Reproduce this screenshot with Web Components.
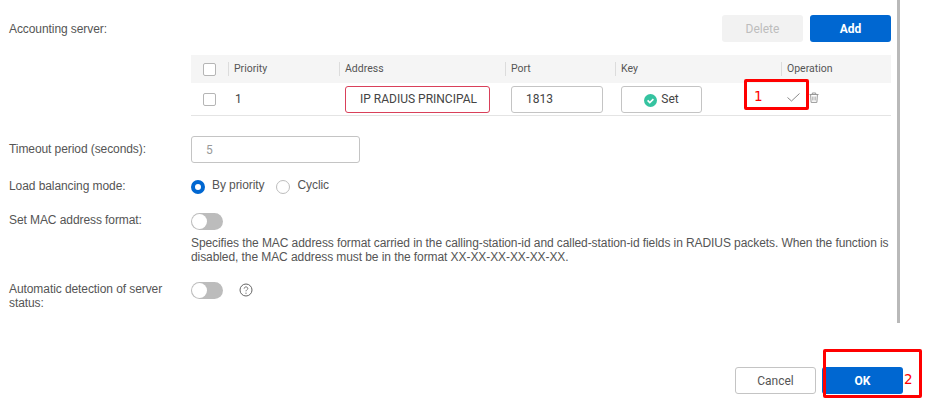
<!DOCTYPE html>
<html>
<head>
<meta charset="utf-8">
<style>
    html, body { margin: 0; padding: 0; background: #fff; }
    body { font-family: "Liberation Sans", Arial, sans-serif; font-size: 12px; letter-spacing: -0.08px; color: #555; }
</style>
</head>
<body>
<dialog-page>
    <form-row label="Accounting server:" pad="22">
        <div style="display:flex;justify-content:flex-end;gap:7px;padding-top:15px;padding-bottom:13px">
            <ui-button kind="disabled">Delete</ui-button>
            <ui-button kind="primary">Add</ui-button>
        </div>
    </form-row>
    <server-table></server-table>
    <form-row label="Timeout period (seconds):" pad="6" style="margin-top:20px">
        <ui-input value="5" width="169" muted></ui-input>
    </form-row>
    <form-row label="Load balancing mode:" pad="1" style="margin-top:15px">
        <div style="display:flex;align-items:center;gap:12px;height:16px">
            <ui-radio checked>By priority</ui-radio>
            <ui-radio>Cyclic</ui-radio>
        </div>
    </form-row>
    <form-row label="Set MAC address format:" pad="0" style="margin-top:19px">
        <ui-toggle></ui-toggle>
        <div style="margin-top:6px;line-height:14px;height:28px;width:702px;color:#555;white-space:nowrap">Specifies the MAC address format carried in the calling-station-id and called-station-id fields in RADIUS packets. When the function is<br>disabled, the MAC address must be in the format XX-XX-XX-XX-XX-XX.</div>
    </form-row>
    <form-row label="Automatic detection of server status:" pad="0" style="margin-top:18px">
        <div style="display:flex;align-items:center;gap:16px">
            <ui-toggle></ui-toggle>
            <svg style="margin-top:-2px" width="14" height="14" viewBox="0 0 14 14" fill="none" stroke="#666" stroke-width="1"><circle cx="7" cy="7" r="6"/><path d="M5.2 5.6c0-1 .8-1.7 1.8-1.7s1.8.7 1.8 1.6c0 1.2-1.8 1.3-1.8 2.8" stroke-width=".9"/><circle cx="7" cy="10.2" r=".6" fill="#666" stroke="none"/></svg>
        </div>
    </form-row>
    <dialog-footer slot="footer"></dialog-footer>
</dialog-page>

<script>
class DialogPage extends HTMLElement {
    constructor() {
        super();
        this.shadow = this.attachShadow({ mode: 'open' });
    }

    connectedCallback() {
        this.shadow.innerHTML = `
            <style>
                :host { display: block; width: 925px; height: 413px; position: relative; overflow: hidden; }
                .pane {
                    box-sizing: border-box;
                    width: 900px;
                    height: 323px;
                    padding: 0 6px 0 9px;
                    border-right: 3px solid #b9b9b9;
                    overflow: hidden;
                }
            </style>
            <div class="pane"><slot></slot></div>
            <slot name="footer"></slot>
        `;
    }
}

class FormRow extends HTMLElement {
    constructor() {
        super();
        this.shadow = this.attachShadow({ mode: 'open' });
    }

    connectedCallback() {
        const pad = this.getAttribute('pad') || 0;
        this.shadow.innerHTML = `
            <style>
                :host { display: grid; grid-template-columns: 182px 700px; }
                .label { padding-top: ${pad}px; padding-right: 10px; line-height: 14px; color: #555; }
            </style>
            <div class="label">${this.getAttribute('label')}</div>
            <div><slot></slot></div>
        `;
    }
}

class UiButton extends HTMLElement {
    constructor() {
        super();
        this.shadow = this.attachShadow({ mode: 'open' });
    }

    connectedCallback() {
        this.shadow.innerHTML = `
            <style>
                :host {
                    display: inline-flex;
                    box-sizing: border-box;
                    align-items: center;
                    justify-content: center;
                    width: 81px;
                    height: 27px;
                    border-radius: 3px;
                    font-family: Roboto, sans-serif;
                    font-size: 12px;
                    letter-spacing: 0;
                }
                :host([kind="primary"]) { background: #0067d1; color: #fff; font-weight: 700; }
                :host([kind="disabled"]) { background: #f2f2f2; color: #bdbdbd; }
                :host([kind="plain"]) { background: #fff; color: #555; border: 1px solid #c4c4c4; }
            </style>
            <slot></slot>
        `;
    }
}

class UiInput extends HTMLElement {
    constructor() {
        super();
        this.shadow = this.attachShadow({ mode: 'open' });
    }

    connectedCallback() {
        const width = this.getAttribute('width');
        this.shadow.innerHTML = `
            <style>
                :host {
                    display: flex;
                    box-sizing: border-box;
                    align-items: center;
                    width: ${width}px;
                    height: 27px;
                    padding-left: 14px;
                    border: 1px solid #c4c4c4;
                    border-radius: 3px;
                    background: #fff;
                    font-family: Roboto, sans-serif;
                    font-size: 12px;
                    letter-spacing: 0;
                    color: #444;
                    white-space: nowrap;
                }
                :host([muted]) { color: #999; }
                :host([invalid]) { border-color: #d9405a; }
            </style>
            ${this.getAttribute('value')}
        `;
    }
}

class UiCheck extends HTMLElement {
    constructor() {
        super();
        this.shadow = this.attachShadow({ mode: 'open' });
    }

    connectedCallback() {
        this.shadow.innerHTML = `
            <style>
                :host { display: block; box-sizing: border-box; width: 13px; height: 13px; border: 1px solid #b5b5b5; border-radius: 2px; background: #fff; }
            </style>
        `;
    }
}

class UiRadio extends HTMLElement {
    constructor() {
        super();
        this.shadow = this.attachShadow({ mode: 'open' });
    }

    connectedCallback() {
        this.shadow.innerHTML = `
            <style>
                :host { display: inline-flex; align-items: center; gap: 7px; color: #555; }
                i { display: block; box-sizing: border-box; width: 14px; height: 14px; border-radius: 50%; border: 1px solid #bdbdbd; background: #fff; margin-top: 1px; }
                :host([checked]) i { border: 4px solid #0067d1; }
                span { position: relative; top: -1px; }
            </style>
            <i></i><span><slot></slot></span>
        `;
    }
}

class UiToggle extends HTMLElement {
    constructor() {
        super();
        this.shadow = this.attachShadow({ mode: 'open' });
    }

    connectedCallback() {
        this.shadow.innerHTML = `
            <style>
                :host { display: flex; align-items: center; box-sizing: border-box; width: 32px; height: 17px; padding-left: 1px; border-radius: 9px; background: #bcbcbc; }
                i { display: block; width: 15px; height: 15px; border-radius: 50%; background: #fff; }
            </style>
            <i></i>
        `;
    }
}

class ServerTable extends HTMLElement {
    constructor() {
        super();
        this.shadow = this.attachShadow({ mode: 'open' });
    }

    connectedCallback() {
        const heads = ['Priority', 'Address', 'Port', 'Key', 'Operation'];
        this.shadow.innerHTML = `
            <style>
                :host {
                    display: block;
                    width: 700px;
                    margin-left: 182px;
                    font-family: Roboto, sans-serif;
                    letter-spacing: 0;
                    color: #555;
                }
                .row { display: grid; grid-template-columns: 37px 111px 166px 110px 166px 110px; align-items: center; }
                .head { height: 28px; background: #f5f5f5; font-size: 10.5px; }
                .body { height: 32px; border-bottom: 1px solid #e4e4e4; font-size: 12px; color: #444; }
                .box { padding-left: 12px; }
                .th { box-sizing: border-box; height: 14px; line-height: 13px; padding-left: 5px; border-left: 1px solid #dcdcdc; }
                .td { padding-left: 6px; }
                .set { display: flex; align-items: center; justify-content: center; gap: 4px; box-sizing: border-box; width: 81px; height: 27px; border: 1px solid #c4c4c4; border-radius: 3px; }
                .set svg { margin-top: 2px; }
                .ops { position: relative; display: flex; align-items: center; height: 100%; padding-left: 6px; }
                .ops svg { display: block; }
                .ops .tick { margin-top: -3px; margin-right: 10px; }
                .ops .bin { margin-top: -3px; }
                .mark {
                    position: absolute;
                    left: -37px;
                    top: -4px;
                    box-sizing: border-box;
                    width: 65px;
                    height: 31px;
                    padding: 6px 0 0 7px;
                    border: 3px solid #f00;
                    border-radius: 2px;
                    color: #f00;
                    font-family: "DejaVu Sans", sans-serif;
                    font-size: 13.5px;
                    line-height: 16px;
                }
            </style>
            <div class="row head">
                <div class="box"><ui-check></ui-check></div>
                ${heads.map(h => `<div class="th">${h}</div>`).join('')}
            </div>
            <div class="row body">
                <div class="box"><ui-check></ui-check></div>
                <div class="td" style="padding-left:7px">1</div>
                <div class="td"><ui-input value="IP RADIUS PRINCIPAL" width="145" invalid></ui-input></div>
                <div class="td"><ui-input value="1813" width="92"></ui-input></div>
                <div class="td">
                    <div class="set">
                        <svg width="13" height="13" viewBox="0 0 13 13"><circle cx="6.5" cy="6.5" r="6.5" fill="#35c3a0"/><path d="M3.6 6.4l2.2 2.2 3.6-3.4" fill="none" stroke="#fff" stroke-width="1.6"/></svg>
                        <span>Set</span>
                    </div>
                </div>
                <div class="ops">
                    <div class="mark">1</div>
                    <svg class="tick" width="13" height="9" viewBox="0 0 13 9" fill="none" stroke="#8a8a8a" stroke-width="1"><path d="M.5 4.5l4 3.5 8-7.5"/></svg>
                    <svg class="bin" width="10" height="11" viewBox="0 0 10 11" fill="none" stroke="#999" stroke-width="1" style="margin-left:-1px"><path d="M.5 2.5h9M3.3 2.5V1h3.4v1.5M1.6 2.5l.5 7.9h5.8l.5-7.9M3.9 4.5v4M6.1 4.5v4"/></svg>
                </div>
            </div>
        `;
    }
}

class DialogFooter extends HTMLElement {
    constructor() {
        super();
        this.shadow = this.attachShadow({ mode: 'open' });
    }

    connectedCallback() {
        this.shadow.innerHTML = `
            <style>
                :host { display: flex; justify-content: flex-end; gap: 6px; position: relative; box-sizing: border-box; width: 903px; padding-top: 44px; }
                .mark {
                    position: absolute;
                    left: 823px;
                    top: 26px;
                    box-sizing: border-box;
                    width: 99px;
                    height: 49px;
                    border: 3px solid #f00;
                    border-radius: 2px;
                }
                .num {
                    position: absolute;
                    left: 904px;
                    top: 48px;
                    color: #f00;
                    font-family: "DejaVu Sans", sans-serif;
                    font-size: 13.5px;
                    line-height: 16px;
                }
            </style>
            <ui-button kind="plain">Cancel</ui-button>
            <ui-button kind="primary">OK</ui-button>
            <div class="mark"></div>
            <div class="num">2</div>
        `;
    }
}

customElements.define('dialog-page', DialogPage);
customElements.define('form-row', FormRow);
customElements.define('ui-button', UiButton);
customElements.define('ui-input', UiInput);
customElements.define('ui-check', UiCheck);
customElements.define('ui-radio', UiRadio);
customElements.define('ui-toggle', UiToggle);
customElements.define('server-table', ServerTable);
customElements.define('dialog-footer', DialogFooter);
</script>
</body>
</html>
